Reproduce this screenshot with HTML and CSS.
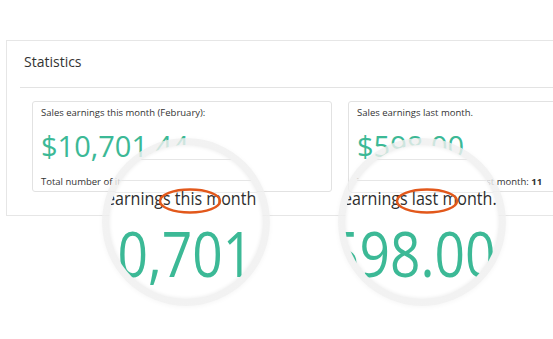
FILE: index.html
```html
<!DOCTYPE html>
<html>
<head>
<meta charset="utf-8">
<link rel="stylesheet" href="styles.css">
</head>
<body>
<div class="page">
  <section class="panel">
    <header class="panel-head">Statistics</header>
    <div class="panel-body">
      <div class="card">
        <div class="label">Sales earnings this month (February):</div>
        <div class="amount">$10,701.44</div>
        <div class="label total">Total number of items sold this month: <b>23</b></div>
      </div>
      <div class="card">
        <div class="label">Sales earnings last month.</div>
        <div class="amount">$598.00</div>
        <div class="label total">Total number of items sold last month: <b>11</b></div>
      </div>
    </div>
  </section>

  <div class="lens lens-one">
    <div class="glass">
      <span class="rule r1"></span>
      <span class="rule r2"></span>
      <span class="rule r3"></span>
      <span class="zoom-label zl-one">earnings this month</span>
      <span class="zoom-amount za-one">10,701.44</span>
    </div>
    <svg class="mark" width="168" height="168" viewBox="0 0 168 168"><ellipse cx="88" cy="63" rx="30" ry="11.5"/></svg>
  </div>

  <div class="lens lens-two">
    <div class="glass">
      <span class="rule r1"></span>
      <span class="rule r2"></span>
      <span class="rule r3"></span>
      <span class="zoom-label zl-two">earnings last month.</span>
      <span class="zoom-amount za-two">598.00</span>
    </div>
    <svg class="mark" width="168" height="168" viewBox="0 0 168 168"><ellipse cx="89" cy="63" rx="30" ry="11.5"/></svg>
  </div>
</div>
</body>
</html>
```

FILE: styles.css
```css
html, body {
  margin: 0;
  padding: 0;
  background: #ffffff;
  overflow: hidden;
}

body {
  width: 553px;
  height: 339px;
  font-family: "Open Sans", "Liberation Sans", sans-serif;
  color: #333333;
}

.page {
  position: relative;
  padding: 40px 0 0 6px;
  width: 700px;
}

.panel {
  width: 640px;
  border: 1px solid #e6e6e6;
  border-right: none;
  padding-left: 13px;
  box-sizing: border-box;
}

.panel-head {
  padding: 11px 0 15px 4px;
  font-size: 14px;
  line-height: 20px;
  color: #333333;
  border-bottom: 1px solid #e3e3e3;
}

.panel-body {
  display: flex;
  gap: 16px;
  padding: 13px 0 23px 12px;
}

.card {
  width: 300px;
  flex: none;
  box-sizing: border-box;
  border: 1px solid #e2e2e2;
  border-radius: 3px;
  padding: 4px 8px 3px 8px;
}

.label {
  font-size: 9.5px;
  line-height: 13px;
  color: #333333;
  white-space: nowrap;
}

.label b {
  font-weight: 700;
}

.amount {
  margin-top: 10px;
  font-size: 29px;
  line-height: 34px;
  color: #3cb996;
  white-space: nowrap;
}

.total {
  margin-top: 12px;
}

/* magnifier lenses */
.lens {
  position: absolute;
  top: 138px;
  width: 168px;
  height: 168px;
  border-radius: 50%;
  background: radial-gradient(circle, rgba(236, 236, 236, 0.85) 0%, rgba(240, 240, 240, 0.8) 86%, rgba(246, 246, 246, 0.55) 100%);
  box-shadow: 0 1px 5px rgba(0, 0, 0, 0.04);
}

.lens-one { left: 102px; }
.lens-two { left: 338px; }

.glass {
  position: absolute;
  left: 7px;
  top: 7px;
  width: 154px;
  height: 154px;
  border-radius: 50%;
  background: #ffffff;
  overflow: hidden;
  box-shadow: inset 0 0 4px rgba(0, 0, 0, 0.09);
}

.rule {
  position: absolute;
  left: 0;
  right: 0;
  height: 1px;
  background: #e6e6e6;
}

.r1 { top: 14px; left: 20px; right: 30px; }
.r2 { top: 35px; left: 10px; }
.r3 { top: 47px; background: #ececec; }

.zoom-label {
  position: absolute;
  top: 43px;
  font-size: 18.7px;
  line-height: 20px;
  color: #2e2e2e;
  white-space: nowrap;
  transform: scaleX(0.86);
  transform-origin: 0 0;
}

.zoom-amount {
  position: absolute;
  top: 77px;
  font-size: 62px;
  line-height: 62px;
  color: #3cb996;
  white-space: nowrap;
  transform: scaleX(0.86);
  transform-origin: 0 0;
}

.zl-one { left: -3px; }
.za-one { left: -22px; }
.zl-two { left: -2px; }
.za-two { left: -16px; }

.mark {
  position: absolute;
  left: 0;
  top: 0;
}

.mark ellipse {
  fill: none;
  stroke: #e2581b;
  stroke-width: 2.5;
}
```
